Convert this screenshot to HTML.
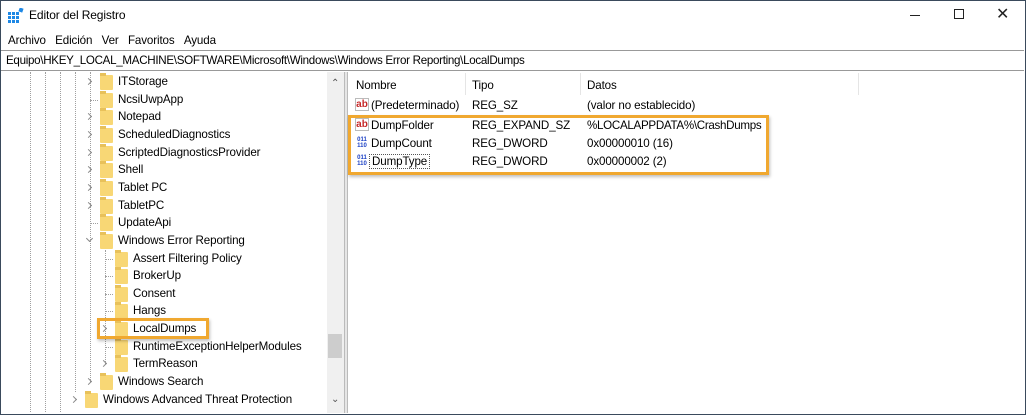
<!DOCTYPE html><html><head><meta charset="utf-8"><style>
*{margin:0;padding:0;box-sizing:border-box}
body{width:1026px;height:415px;background:#fff;font-family:"Liberation Sans",sans-serif;font-size:11.6px;letter-spacing:-0.12px;color:#000;position:relative;overflow:hidden}
.a{position:absolute;white-space:nowrap}
.f{position:absolute;width:13px;height:15px;background:#f8d775;border-radius:1px}
.f:before{content:"";position:absolute;left:0;top:-2px;width:6px;height:3px;background:#e8c15a}
.ch{position:absolute;width:5px;height:5px;border-right:1px solid #888;border-bottom:1px solid #888;transform:rotate(-45deg)}
.dv{position:absolute;border-left:1px dotted #a0a0a0}
.dh{position:absolute;border-top:1px dotted #a0a0a0;width:8px}
.ab{position:absolute;width:14px;height:13px;color:#c62828;font-size:10px;font-weight:bold;line-height:11px;border:1px solid #bbb;background:#fff;text-align:center;letter-spacing:0}
.bn{position:absolute;width:14px;height:13px;color:#1a3fc4;font-size:6px;font-weight:bold;line-height:6px;text-align:center;letter-spacing:0;background:#fff}
</style></head><body>
<div class="a" style="left:0;top:0;width:1026px;height:415px;border:1px solid #3a4a5c"></div>
<svg class="a" style="left:8px;top:8px" width="16" height="16"><g fill="#1e88e5"><rect x="0" y="4" width="3" height="3"/><rect x="4" y="4" width="3" height="3"/><rect x="8" y="4" width="3" height="3"/><rect x="0" y="8" width="3" height="3"/><rect x="4" y="8" width="3" height="3"/><rect x="8" y="8" width="3" height="3"/><rect x="0" y="12" width="3" height="3"/><rect x="4" y="12" width="3" height="3"/><rect x="8" y="12" width="3" height="3"/><rect x="11" y="0" width="4" height="4" transform="rotate(20 13 2)"/></g></svg>
<div class="a" style="left:29px;top:8px;font-size:12px">Editor del Registro</div>
<div class="a" style="left:910px;top:15px;width:10px;border-top:1px solid #222"></div>
<div class="a" style="left:954px;top:9px;width:10px;height:10px;border:1px solid #222"></div>
<div class="a" style="left:996px;top:4px;font-size:16px;color:#222">✕</div>
<div class="a" style="left:8px;top:34px">Archivo&nbsp;&nbsp;&nbsp;Edición&nbsp;&nbsp;&nbsp;Ver&nbsp;&nbsp;&nbsp;Favoritos&nbsp;&nbsp;&nbsp;Ayuda</div>
<div class="a" style="left:1px;top:50px;width:1023px;height:21px;border-top:1px solid #999;border-bottom:1px solid #999"></div>
<div class="a" style="left:6px;top:54px;letter-spacing:-0.3px">Equipo\HKEY_LOCAL_MACHINE\SOFTWARE\Microsoft\Windows\Windows Error Reporting\LocalDumps</div>
<div class="dv" style="left:30px;top:72px;height:340px"></div>
<div class="dv" style="left:45px;top:72px;height:340px"></div>
<div class="dv" style="left:60px;top:72px;height:340px"></div>
<div class="dv" style="left:75px;top:72px;height:320px"></div>
<div class="dv" style="left:90px;top:72px;height:310px"></div>
<div class="dv" style="left:105px;top:250px;height:114px"></div>
<div id="tree"></div>
<div class="a" style="left:327px;top:72px;width:17px;height:341px;background:#f0f0f0"></div>
<div class="a" style="left:328px;top:334px;width:14px;height:24px;background:#cdcdcd"></div>
<div class="a" style="left:331px;top:78px;font-size:10px;color:#555">&#8963;</div>
<div class="a" style="left:331px;top:394px;font-size:10px;color:#555">&#8964;</div>
<div class="a" style="left:344px;top:72px;width:4px;height:341px;background:#e6e6e6;border-left:1px solid #bbb;border-right:1px solid #bbb"></div>
<div class="a" style="left:465px;top:73px;height:22px;border-left:1px solid #e5e5e5"></div>
<div class="a" style="left:580px;top:73px;height:22px;border-left:1px solid #e5e5e5"></div>
<div class="a" style="left:858px;top:73px;height:22px;border-left:1px solid #e5e5e5"></div>
<div class="a" style="left:356px;top:79px">Nombre</div><div class="a" style="left:472px;top:79px">Tipo</div><div class="a" style="left:587px;top:79px">Datos</div>
<div class="ab" style="left:355px;top:98px">ab</div><div class="a" style="left:371px;top:99px">(Predeterminado)</div><div class="a" style="left:472px;top:99px">REG_SZ</div><div class="a" style="left:587px;top:99px">(valor no establecido)</div>
<div class="ab" style="left:355px;top:118px">ab</div><div class="a" style="left:371px;top:119px">DumpFolder</div><div class="a" style="left:472px;top:119px">REG_EXPAND_SZ</div><div class="a" style="left:587px;top:119px;letter-spacing:-0.3px">%LOCALAPPDATA%\CrashDumps</div>
<div class="bn" style="left:355px;top:137px">011<br>110</div><div class="a" style="left:371px;top:137px">DumpCount</div><div class="a" style="left:472px;top:137px">REG_DWORD</div><div class="a" style="left:587px;top:137px">0x00000010 (16)</div>
<div class="bn" style="left:355px;top:155px">011<br>110</div><div class="a" style="left:369px;top:154px;border:1px dotted #555;padding:0 2px">DumpType</div><div class="a" style="left:472px;top:155px">REG_DWORD</div><div class="a" style="left:587px;top:155px">0x00000002 (2)</div>
<div class="a" style="left:348px;top:115px;width:421px;height:60px;border:3px solid #f0a830;box-shadow:1px 2px 3px rgba(0,0,0,.25)"></div>
<div class="a" style="left:97px;top:318px;width:112px;height:21px;border:3px solid #f0a830;box-shadow:1px 2px 3px rgba(0,0,0,.25)"></div>
<script>
var rows=[["ITStorage",1,1],["NcsiUwpApp",1,0],["Notepad",1,1],["ScheduledDiagnostics",1,1],["ScriptedDiagnosticsProvider",1,1],["Shell",1,1],["Tablet PC",1,1],["TabletPC",1,1],["UpdateApi",1,0],["Windows Error Reporting",1,2],["Assert Filtering Policy",2,0],["BrokerUp",2,0],["Consent",2,0],["Hangs",2,0],["LocalDumps",2,1],["RuntimeExceptionHelperModules",2,0],["TermReason",2,1],["Windows Search",1,1],["Windows Advanced Threat Protection",0,1]];
var h="";rows.forEach(function(r,i){var y=82+i*17.65;var lv=r[1];var cx=lv==0?75:lv==1?90:105;var fx=lv==0?85:lv==1?100:115;var tx=lv==0?103:lv==1?118:133;
if(r[2]==1)h+='<div class="ch" style="left:'+(cx-4)+'px;top:'+(y-3)+'px"></div>';
else if(r[2]==2)h+='<div class="ch" style="left:'+(cx-3)+'px;top:'+(y-5)+'px;transform:rotate(45deg)"></div>';
else h+='<div class="dh" style="left:'+cx+'px;top:'+y+'px"></div>';
h+='<div class="f" style="left:'+fx+'px;top:'+(y-7)+'px"></div><div class="a" style="left:'+tx+'px;top:'+(y-7)+'px">'+r[0]+'</div>';});
document.getElementById("tree").innerHTML=h;
</script>
</body></html>
